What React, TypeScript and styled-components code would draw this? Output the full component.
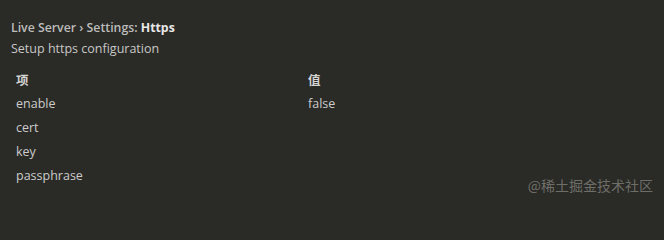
import React from "react";
import styled, { createGlobalStyle } from "styled-components";

const Global = createGlobalStyle`
  html, body { margin: 0; padding: 0; background: #2a2a26; }
  body { width: 664px; height: 203px; overflow: hidden; }
`;

const Page = styled.div`
  position: relative;
  width: 664px;
  height: 203px;
  box-sizing: border-box;
  padding: 19px 11px 0 11px;
  background: #2a2a26;
  font-family: "Open Sans", "Noto Sans CJK SC", sans-serif;
  color: #cccccc;
`;

const Title = styled.div`
  font-size: 12.3px;
  font-weight: 600;
  line-height: 17px;
  color: #bdbdbb;
`;

const Strong = styled.span`
  color: #e8e8e8;
  font-weight: 700;
`;

const Desc = styled.div`
  margin-top: 4px;
  font-size: 12.5px;
  line-height: 17px;
  color: #c8c8c6;
`;

const Table = styled.div`
  margin-top: 10px;
  padding-left: 5px;
  display: grid;
  grid-template-columns: 292px 1fr;
  grid-auto-rows: 24px;
  align-items: center;
  font-size: 12.5px;
`;

const Head = styled.div`
  font-family: "Noto Sans CJK SC", sans-serif;
  font-weight: 700;
  color: #d4d4d2;
`;

const Cell = styled.div`
  color: #cccccc;
`;

const Watermark = styled.div`
  position: absolute;
  right: 11px;
  bottom: 8px;
  font-family: "Noto Sans CJK SC", sans-serif;
  font-size: 14px;
  color: #6e6e69;
`;

const rows: [string, string][] = [
  ["enable", "false"],
  ["cert", ""],
  ["key", ""],
  ["passphrase", ""],
];

export default function App() {
  return (
    <>
      <Global />
      <Page>
        <Title>
          Live Server › Settings: <Strong>Https</Strong>
        </Title>
        <Desc>Setup https configuration</Desc>
        <Table>
          <Head>项</Head>
          <Head>值</Head>
          {rows.map(([k, v]) => (
            <React.Fragment key={k}>
              <Cell>{k}</Cell>
              <Cell>{v}</Cell>
            </React.Fragment>
          ))}
        </Table>
        <Watermark>@稀土掘金技术社区</Watermark>
      </Page>
    </>
  );
}
